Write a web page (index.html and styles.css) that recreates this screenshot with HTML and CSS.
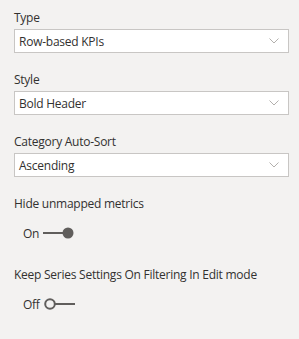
FILE: index.html
```html
<!DOCTYPE html>
<html lang="en">
<head>
    <meta charset="UTF-8">
    <meta name="viewport" content="width=device-width, initial-scale=1.0">
    <title>Format pane</title>
    <link rel="stylesheet" href="styles.css">
</head>
<body>
    <div class="pane">
        <!-- ドロップダウン -->
        <div class="field">
            <div class="label">Type</div>
            <div class="dropdown">
                <span>Row-based KPIs</span>
                <svg class="chevron" width="10" height="6" viewBox="0 0 10 6"><path d="M0.5 0.5 L5 5 L9.5 0.5" fill="none" stroke="#b3b0ad" stroke-width="1"/></svg>
            </div>
        </div>

        <div class="field">
            <div class="label">Style</div>
            <div class="dropdown">
                <span>Bold Header</span>
                <svg class="chevron" width="10" height="6" viewBox="0 0 10 6"><path d="M0.5 0.5 L5 5 L9.5 0.5" fill="none" stroke="#b3b0ad" stroke-width="1"/></svg>
            </div>
        </div>

        <div class="field">
            <div class="label">Category Auto-Sort</div>
            <div class="dropdown">
                <span>Ascending</span>
                <svg class="chevron" width="10" height="6" viewBox="0 0 10 6"><path d="M0.5 0.5 L5 5 L9.5 0.5" fill="none" stroke="#b3b0ad" stroke-width="1"/></svg>
            </div>
        </div>

        <!-- トグル -->
        <div class="field toggle-field">
            <div class="label">Hide unmapped metrics</div>
            <div class="toggle">
                <span class="toggle-text">On</span>
                <svg width="31" height="12" viewBox="0 0 31 12"><line x1="0" y1="6" x2="20" y2="6" stroke="#605e5c" stroke-width="2"/><circle cx="25" cy="6" r="5.5" fill="#605e5c"/></svg>
            </div>
        </div>

        <div class="field toggle-field">
            <div class="label">Keep Series Settings On Filtering In Edit mode</div>
            <div class="toggle">
                <span class="toggle-text">Off</span>
                <svg width="31" height="12" viewBox="0 0 31 12"><circle cx="6" cy="6" r="4.8" fill="none" stroke="#605e5c" stroke-width="2"/><line x1="11" y1="6" x2="31" y2="6" stroke="#605e5c" stroke-width="2"/></svg>
            </div>
        </div>
    </div>
</body>
</html>
```

FILE: styles.css
```css
html, body {
    margin: 0;
    background-color: #f3f2f1;
    font-family: "Open Sans", "Noto Sans", sans-serif;
    color: #323130;
    letter-spacing: -0.25px;
}

.pane {
    padding: 10px 10px 0 14px;
}

.field {
    margin-bottom: 19px;
}

.label {
    font-size: 12px;
    line-height: 16px;
    margin-bottom: 3px;
}

/* ドロップダウン */
.dropdown {
    display: flex;
    align-items: center;
    justify-content: space-between;
    box-sizing: border-box;
    width: 275px;
    height: 24px;
    padding: 0 9px 0 4px;
    background-color: #fff;
    border: 1px solid #c8c6c4;
    font-size: 12px;
}

.chevron {
    display: block;
}

/* トグル */
.toggle-field {
    margin-bottom: 24px;
}

.toggle-field .label {
    margin-bottom: 11px;
}

.toggle {
    display: flex;
    align-items: center;
    height: 20px;
    padding-left: 9px;
    font-size: 12px;
}

.toggle-text {
    margin-right: 4px;
}

.toggle svg {
    display: block;
}
```
